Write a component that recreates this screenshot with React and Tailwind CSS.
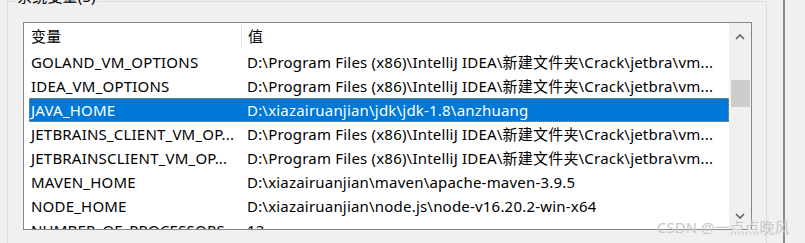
import React from 'react';

const PROG = 'D:\\Program Files (x86)\\IntelliJ IDEA\\新建文件夹\\Crack\\jetbra\\vm...';

const rows = [
  { name: 'GOLAND_VM_OPTIONS', value: PROG },
  { name: 'IDEA_VM_OPTIONS', value: PROG },
  { name: 'JAVA_HOME', value: 'D:\\xiazairuanjian\\jdk\\jdk-1.8\\anzhuang', selected: true },
  { name: 'JETBRAINS_CLIENT_VM_OP...', value: PROG },
  { name: 'JETBRAINSCLIENT_VM_OP...', value: PROG },
  { name: 'MAVEN_HOME', value: 'D:\\xiazairuanjian\\maven\\apache-maven-3.9.5' },
  { name: 'NODE_HOME', value: 'D:\\xiazairuanjian\\node.js\\node-v16.20.2-win-x64' },
  { name: 'NUMBER_OF_PROCESSORS', value: '12' },
];

const Chevron = ({ down }) => (
  <svg width="10" height="6" viewBox="0 0 10 6" className="block">
    <path
      d={down ? 'M1 1 L5 5 L9 1' : 'M1 5 L5 1 L9 5'}
      fill="none"
      stroke="#606060"
      strokeWidth="1.6"
    />
  </svg>
);

export default function App() {
  return (
    <div
      className="relative w-[805px] h-[243px] overflow-hidden bg-[#f0f0f0] flex text-[15px] tracking-[0.2px] text-black"
      style={{ fontFamily: '"Noto Sans", "Noto Sans CJK SC", sans-serif' }}
    >
      <div className="pl-[7px] pt-px">
        {/* group box */}
        <div className="relative w-[760px] h-[260px] border-l border-t border-r border-[#dcdcdc] pl-[15px] pt-[20px]">
          <span className="absolute left-[8px] top-[-16px] px-px bg-[#f0f0f0] leading-[20px]">系统变量(S)</span>

          {/* list view */}
          <div className="w-[729px] h-[208px] border border-[#828790] bg-white flex overflow-hidden">
            <div className="w-[705px] flex flex-col">
              <div className="h-[27px] flex items-stretch shrink-0">
                <div className="w-[217px] pl-[7px] flex items-center">变量</div>
                <div className="w-px my-px bg-[#e5e5e5]" />
                <div className="pl-[6px] flex items-center">值</div>
              </div>
              {rows.map((r) => (
                <div
                  key={r.name}
                  className={`h-[24px] shrink-0 ml-[5px] flex items-center whitespace-nowrap ${
                    r.selected ? 'bg-[#0078d7] text-white outline outline-1 outline-dotted outline-[#d9893a] -outline-offset-1' : ''
                  }`}
                >
                  <div className="w-[214px] pl-[2px] overflow-hidden">{r.name}</div>
                  <div className="pl-[4px] overflow-hidden">{r.value}</div>
                </div>
              ))}
            </div>

            {/* scrollbar */}
            <div className="w-[22px] bg-[#f0f0f0] flex flex-col items-center">
              <div className="h-[26px] w-full flex items-center justify-center pt-[2px]">
                <Chevron />
              </div>
              <div className="h-[31px]" />
              <div className="h-[27px] w-[19px] bg-[#cdcdcd]" />
              <div className="flex-1" />
              <div className="h-[22px] w-full flex items-center justify-center pb-[4px]">
                <Chevron down />
              </div>
            </div>
          </div>
        </div>
      </div>

      <div className="w-[16px]" />
      <div className="w-[2px] h-full bg-[#8c8c8c]" />

      <span className="absolute left-[657px] top-[218px] text-[15px] tracking-normal text-[#c8c8c8] leading-[18px] whitespace-nowrap">
        CSDN @一点点晚风
      </span>
    </div>
  );
}
